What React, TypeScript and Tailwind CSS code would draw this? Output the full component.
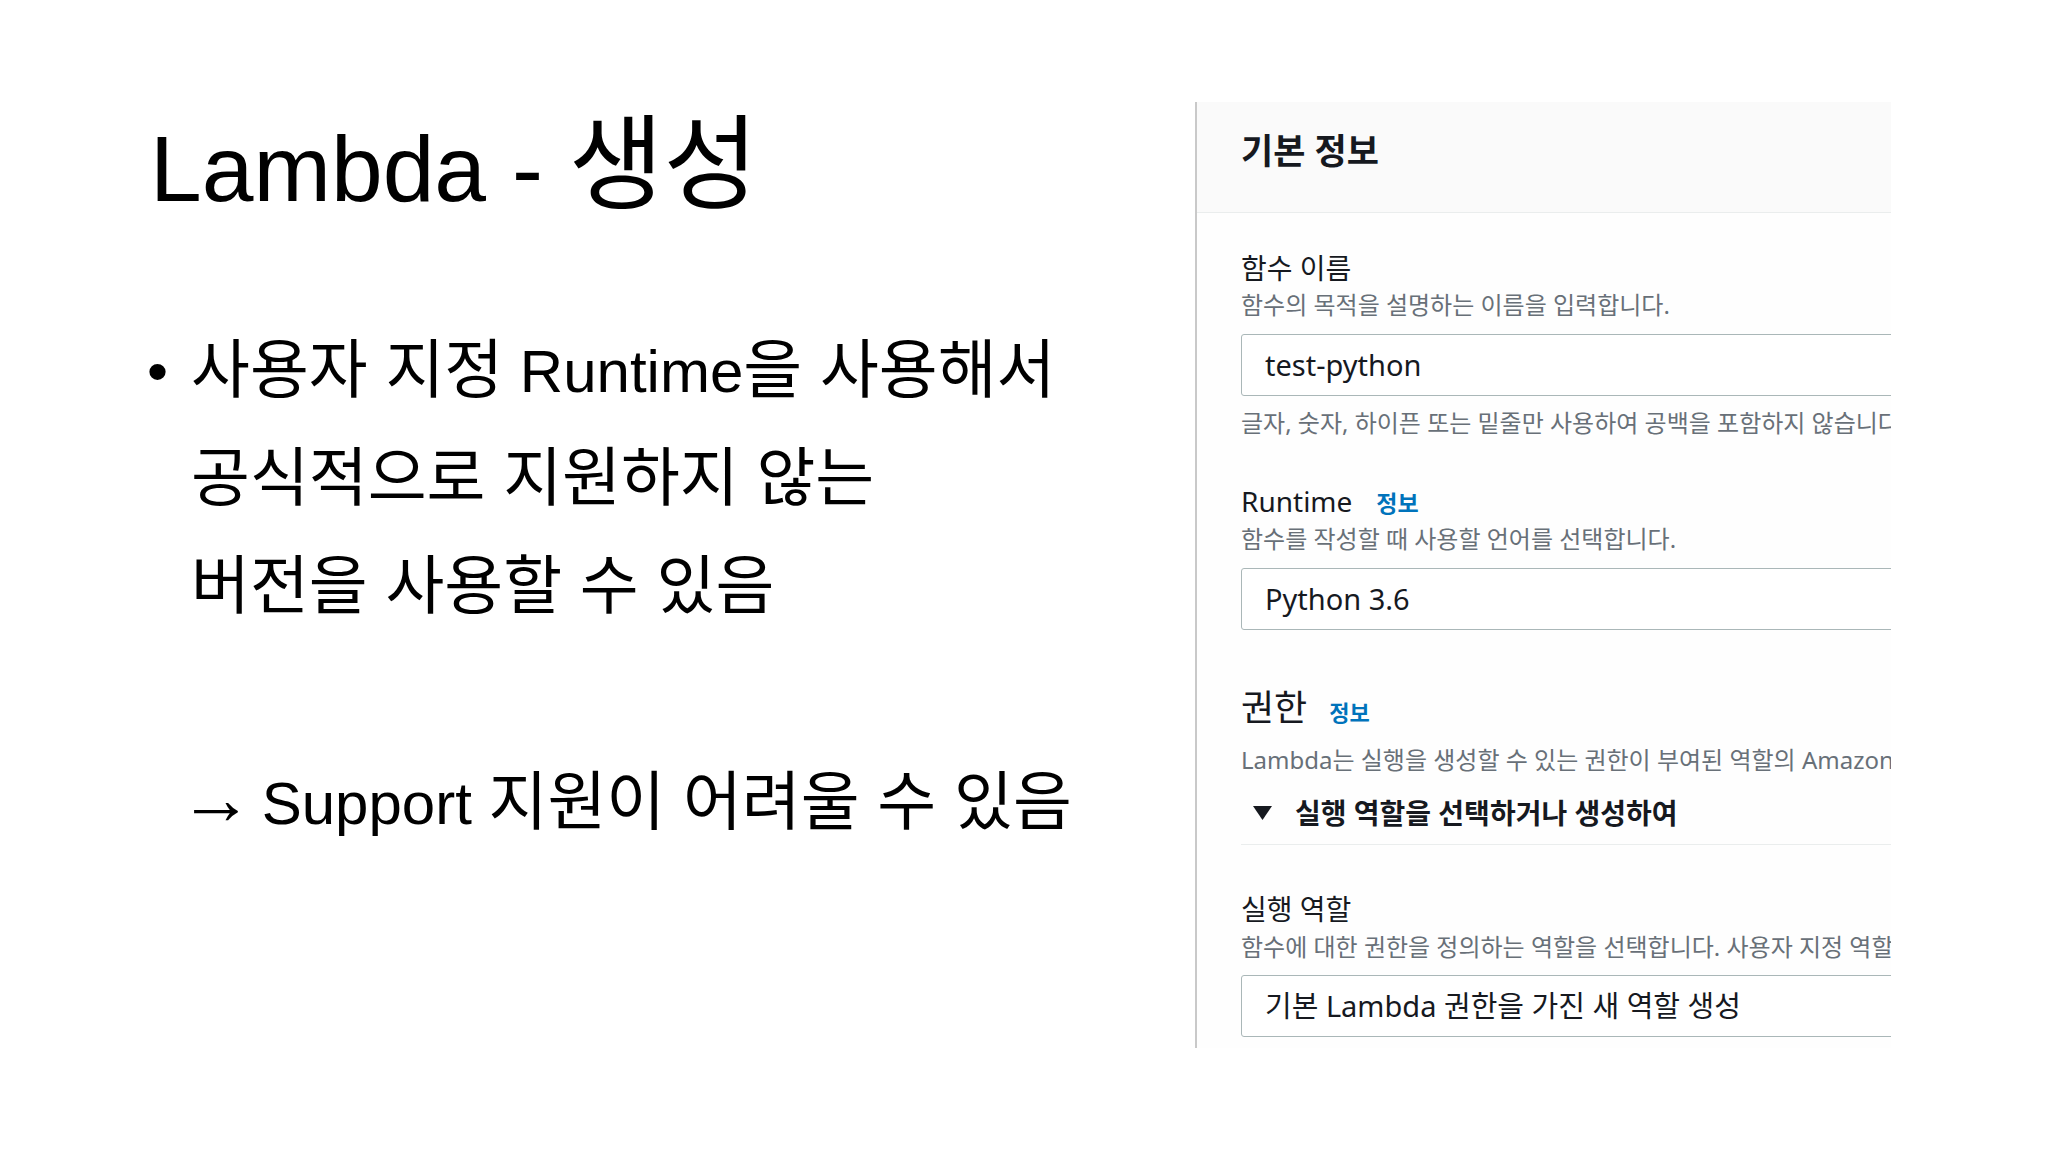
import React from 'react';

const slideFont = "font-['Liberation_Sans','Noto_Sans_CJK_KR',sans-serif]";
const panelFont = "font-['Noto_Sans','Noto_Sans_CJK_KR',sans-serif]";

// Hangul in the slide is set a little larger than the Latin text
const K = ({ children }: { children: React.ReactNode }) => (
  <span className="text-[64px] leading-[80px]">{children}</span>
);

const Label = ({ children, className = '' }: { children: React.ReactNode; className?: string }) => (
  <p className={`text-[28px] leading-[32px] text-[#16191f] whitespace-nowrap ${className}`}>{children}</p>
);

const Desc = ({ children, className = '' }: { children: React.ReactNode; className?: string }) => (
  <p className={`text-[24px] leading-[28px] text-[#687078] whitespace-nowrap ${className}`}>{children}</p>
);

const Field = ({ value, className = '' }: { value: string; className?: string }) => (
  <div
    className={`flex h-[62px] w-[820px] items-center rounded-[3px] border border-[#aab7b8] bg-white pl-[23px] text-[29px] text-[#16191f] whitespace-nowrap ${className}`}
  >
    {value}
  </div>
);

const InfoLink = ({ className = '' }: { className?: string }) => (
  <span className={`font-bold leading-none text-[#0073bb] ${className}`}>정보</span>
);

const LambdaPanel = () => (
  <div className={`mt-[102px] h-[946px] w-[696px] shrink-0 overflow-hidden border-l-2 border-[#c9c9c9] bg-[#fefefe] ${panelFont}`}>
    <div className="flex h-[111px] items-center border-b border-[#eaeded] bg-[#fafafa] pb-[12px] pl-[44px]">
      <h2 className="text-[35px] font-bold text-[#16191f]">기본 정보</h2>
    </div>

    <div className="pl-[44px] pt-[39px] pb-[11px]">
      <Label>함수 이름</Label>
      <Desc className="mt-[7px]">함수의 목적을 설명하는 이름을 입력합니다.</Desc>
      <Field value="test-python" className="mt-[15px]" />
      <Desc className="mt-[13px]">글자, 숫자, 하이픈 또는 밑줄만 사용하여 공백을 포함하지 않습니다. 예: myFunctionName</Desc>

      <Label className="mt-[48px]">
        Runtime<InfoLink className="ml-[24px] text-[23px]" />
      </Label>
      <Desc className="mt-[8px]">함수를 작성할 때 사용할 언어를 선택합니다.</Desc>
      <Field value="Python 3.6" className="mt-[15px]" />

      <p className="mt-[58px] text-[36px] leading-[40px] text-[#16191f] whitespace-nowrap">
        권한<InfoLink className="ml-[22px] text-[22px]" />
      </p>
      <Desc className="mt-[18px]">
        Lambda는 실행을 생성할 수 있는 권한이 부여된 역할의 Amazon CloudWatch Logs에 로그를 업로드할 수 있는 권한을 생성합니다.
      </Desc>

      <div className="mt-[23px] flex h-[32px] items-center">
        <svg width="19" height="14" viewBox="0 0 19 14" className="ml-[12px] shrink-0">
          <polygon points="0,0 19,0 9.5,14" fill="#16191f" />
        </svg>
        <span className="ml-[23px] text-[28px] font-bold leading-[32px] text-[#16191f] whitespace-nowrap">
          실행 역할을 선택하거나 생성하여
        </span>
      </div>
      <div className="mt-[15px] border-b border-[#eaeded]" />

      <Label className="mt-[48px]">실행 역할</Label>
      <Desc className="mt-[8px]">
        함수에 대한 권한을 정의하는 역할을 선택합니다. 사용자 지정 역할을 생성하려면 IAM 콘솔로 이동하십시오.
      </Desc>
      <Field value="기본 Lambda 권한을 가진 새 역할 생성" className="mt-[14px]" />
    </div>
  </div>
);

export default function App() {
  return (
    <div className="flex h-[1152px] w-[2048px] overflow-hidden bg-white">
      <div className={`w-[1195px] shrink-0 pl-[150px] pt-[123px] text-black ${slideFont}`}>
        <h1 className="text-[93px] leading-[93px] whitespace-nowrap">
          Lambda - <span className="text-[103px] leading-[80px]">생성</span>
        </h1>
        <div className="mt-[102px] flex text-[60px] leading-[108px]">
          <span className="-ml-[3px] w-[44px] shrink-0">•</span>
          <div className="whitespace-nowrap">
            <p>
              <K>사용자 지정</K> Runtime<K>을 사용해서</K>
            </p>
            <p>
              <K>공식적으로 지원하지 않는</K>
            </p>
            <p>
              <K>버전을 사용할 수 있음</K>
            </p>
            <p className="-ml-[12px] mt-[108px]">
              <span className="text-[74px] leading-[80px] tracking-[-8px]">→</span> Support{' '}
              <K>지원이 어려울 수 있음</K>
            </p>
          </div>
        </div>
      </div>
      <LambdaPanel />
    </div>
  );
}
